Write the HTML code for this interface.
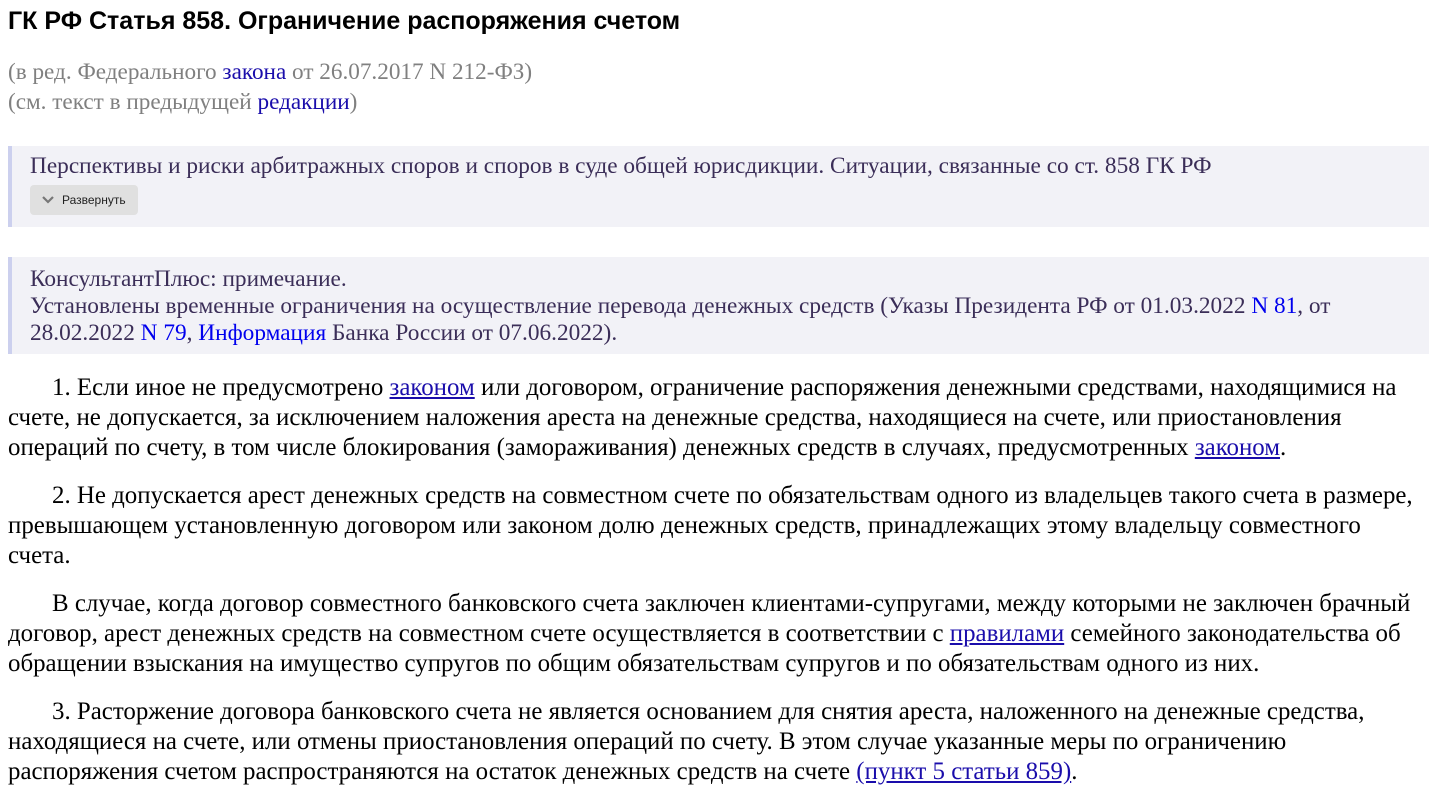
<!DOCTYPE html>
<html><head><meta charset="utf-8"><style>
body{margin:0;background:#fff;width:1449px;height:795px;overflow:hidden;font-family:"Liberation Serif","Noto Serif CJK SC",serif;}
.a{position:absolute;left:8px;white-space:nowrap;}
h1{position:absolute;left:8px;top:5px;margin:0;font:bold 25px "Liberation Sans",sans-serif;color:#000;line-height:32px;}
.gray{color:#808080;font-size:23.2px;line-height:30px;top:57px;}
.gray a{color:#1a0dab;text-decoration:none}
.box{position:absolute;left:8px;background:#f2f2f7;border-left:4px solid #ccd0ee;color:#3b2e58;font-size:23.3px;line-height:27px;padding-left:18px;box-sizing:border-box;width:1421px}
.box a{color:#0000ee;text-decoration:none}
.btn{position:absolute;left:18px;top:39px;width:108px;height:30px;background:#e0e0e0;border-radius:4px;font:12px "Liberation Sans",sans-serif;color:#222;line-height:30px;}
.p{font-size:24.9px;line-height:30px;color:#000;}
.p a{color:#1a0dab;text-decoration:underline}
</style></head><body>
<h1>ГК РФ Статья 858. Ограничение распоряжения счетом</h1>
<div class="a gray">(в ред. Федерального <a>закона</a> от 26.07.2017 N 212-ФЗ)<br>(см. текст в предыдущей <a>редакции</a>)</div>
<div class="box" style="top:146px;height:81px;padding-top:7px">Перспективы и риски арбитражных споров и споров в суде общей юрисдикции. Ситуации, связанные со ст. 858 ГК РФ
<div class="btn"><svg width="14" height="10" style="position:absolute;left:11px;top:10px" viewBox="0 0 14 10"><path d="M2 2 L7 7 L12 2" stroke="#777" stroke-width="2.2" fill="none"/></svg><span style="position:absolute;left:32px">Развернуть</span></div></div>
<div class="box" style="top:257px;height:97px;padding-top:9px;white-space:nowrap">КонсультантПлюс: примечание.<br>Установлены временные ограничения на осуществление перевода денежных средств (Указы Президента РФ от 01.03.2022 <a>N 81</a>, от<br>28.02.2022 <a>N 79</a>, <a>Информация</a> Банка России от 07.06.2022).</div>
<div class="a p" style="top:373px"><span style="display:inline-block;width:44px"></span>1. Если иное не предусмотрено <a>законом</a> или договором, ограничение распоряжения денежными средствами, находящимися на<br>счете, не допускается, за исключением наложения ареста на денежные средства, находящиеся на счете, или приостановления<br>операций по счету, в том числе блокирования (замораживания) денежных средств в случаях, предусмотренных <a>законом</a>.</div>
<div class="a p" style="top:481px"><span style="display:inline-block;width:44px"></span>2. Не допускается арест денежных средств на совместном счете по обязательствам одного из владельцев такого счета в размере,<br>превышающем установленную договором или законом долю денежных средств, принадлежащих этому владельцу совместного<br>счета.</div>
<div class="a p" style="top:589px"><span style="display:inline-block;width:44px"></span>В случае, когда договор совместного банковского счета заключен клиентами-супругами, между которыми не заключен брачный<br>договор, арест денежных средств на совместном счете осуществляется в соответствии с <a>правилами</a> семейного законодательства об<br>обращении взыскания на имущество супругов по общим обязательствам супругов и по обязательствам одного из них.</div>
<div class="a p" style="top:697px"><span style="display:inline-block;width:44px"></span>3. Расторжение договора банковского счета не является основанием для снятия ареста, наложенного на денежные средства,<br>находящиеся на счете, или отмены приостановления операций по счету. В этом случае указанные меры по ограничению<br>распоряжения счетом распространяются на остаток денежных средств на счете <a>(пункт 5 статьи 859)</a>.</div>
</body></html>
